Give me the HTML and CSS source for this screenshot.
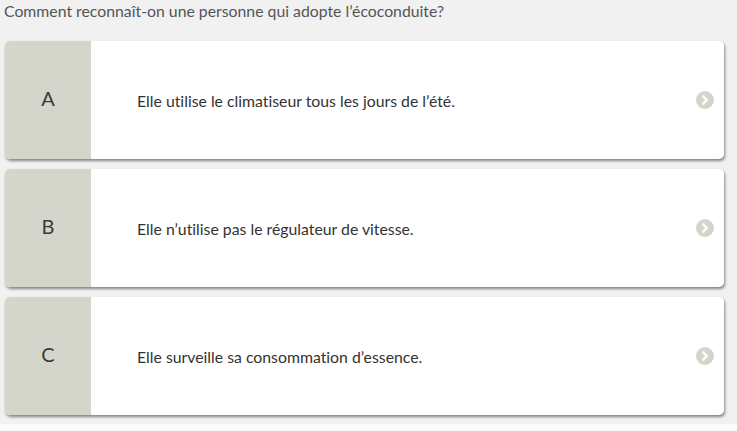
FILE: index.html
```html
<!DOCTYPE html>
<html lang="fr">
<head>
<meta charset="utf-8">
<link rel="stylesheet" href="styles.css">
</head>
<body>
<div class="page">
  <p class="question">Comment reconnaît-on une personne qui adopte l’écoconduite?</p>
  <div class="answers">
    <div class="card">
      <div class="letter">A</div>
      <div class="text">Elle utilise le climatiseur tous les jours de l’été.</div>
      <svg class="chev" width="18" height="18" viewBox="0 0 18 18"><circle cx="9" cy="9" r="9" fill="#d4d6cc"/><path d="M7.3 5.4 L10.9 9 L7.3 12.6" fill="none" stroke="#fff" stroke-width="2.4" stroke-linecap="round" stroke-linejoin="round"/></svg>
    </div>
    <div class="card">
      <div class="letter">B</div>
      <div class="text">Elle n’utilise pas le régulateur de vitesse.</div>
      <svg class="chev" width="18" height="18" viewBox="0 0 18 18"><circle cx="9" cy="9" r="9" fill="#d4d6cc"/><path d="M7.3 5.4 L10.9 9 L7.3 12.6" fill="none" stroke="#fff" stroke-width="2.4" stroke-linecap="round" stroke-linejoin="round"/></svg>
    </div>
    <div class="card">
      <div class="letter">C</div>
      <div class="text">Elle surveille sa consommation d’essence.</div>
      <svg class="chev" width="18" height="18" viewBox="0 0 18 18"><circle cx="9" cy="9" r="9" fill="#d4d6cc"/><path d="M7.3 5.4 L10.9 9 L7.3 12.6" fill="none" stroke="#fff" stroke-width="2.4" stroke-linecap="round" stroke-linejoin="round"/></svg>
    </div>
  </div>
</div>
</body>
</html>
```
FILE: styles.css
```css
html, body {
  margin: 0;
  padding: 0;
  background: #fafafa;
}
body {
  font-family: Lato, "Liberation Sans", sans-serif;
  font-variant-ligatures: none;
}
.page {
  background: #f1f1f1;
  height: 424px;
  padding: 0 13px 0 5px;
  box-sizing: border-box;
}
.question {
  margin: 0;
  padding: 1px 0 0 0;
  margin-left: -1px;
  font-size: 15.8px;
  line-height: 19px;
  color: #555;
}
.answers {
  display: flex;
  flex-direction: column;
  gap: 10px;
  margin-top: 21px;
}
.card {
  display: flex;
  align-items: center;
  height: 118px;
  background: #fff;
  border-radius: 5px;
  overflow: hidden;
  box-shadow: 1px 2px 3px rgba(0, 0, 0, 0.45);
}
.letter {
  width: 86px;
  align-self: stretch;
  display: flex;
  align-items: center;
  justify-content: center;
  padding-bottom: 4px;
  box-sizing: border-box;
  background: #d4d6cc;
  font-size: 20px;
  color: #3a3a3a;
}
.text {
  flex: 1;
  padding-left: 46px;
  font-size: 15.8px;
  color: #333;
}
.chev {
  margin-right: 10px;
  flex: none;
}
```
